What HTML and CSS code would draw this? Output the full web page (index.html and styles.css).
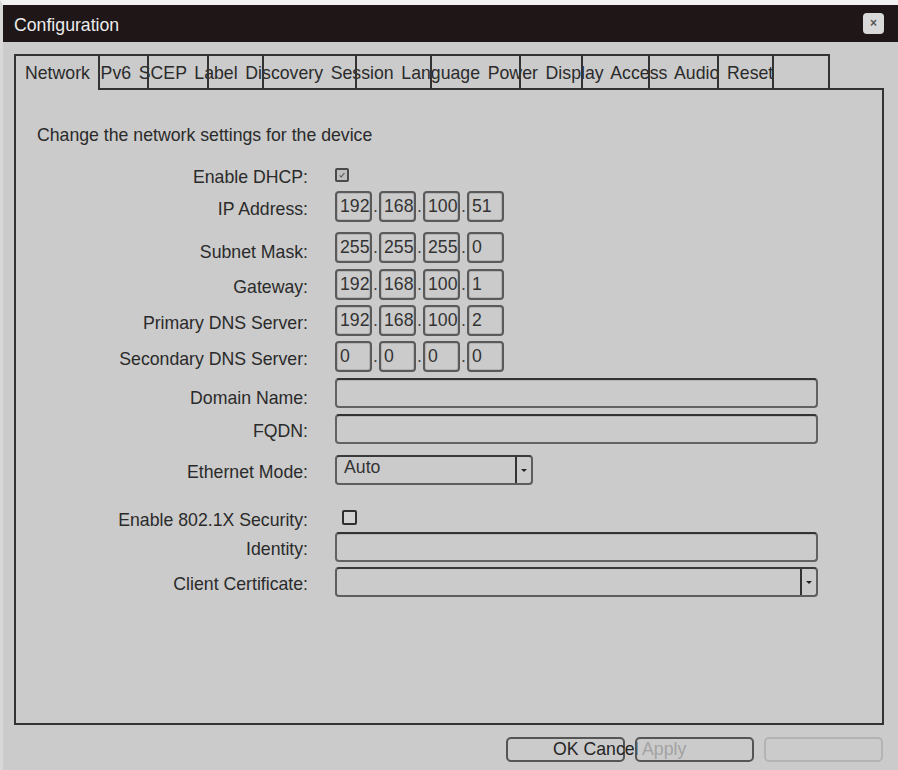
FILE: index.html
```html
<!DOCTYPE html>
<html lang="en">
<head>
<meta charset="utf-8">
<title>Configuration</title>
<link rel="stylesheet" href="styles.css">
</head>
<body>
<div class="window">
  <div class="titlebar">
    <span class="title">Configuration</span>
    <span class="close">&#215;</span>
  </div>

  <div class="tabstrip">
    <div class="tablabels"><span class="first">Network</span> Pv6 SCEP Label Discovery Session Language Power Display Access Audio Reset</div>
    <div class="tab active"></div>
    <div class="tab"></div>
    <div class="tab"></div>
    <div class="tab"></div>
    <div class="tab"></div>
    <div class="tab"></div>
    <div class="tab"></div>
    <div class="tab"></div>
    <div class="tab"></div>
    <div class="tab"></div>
    <div class="tab"></div>
    <div class="tab"></div>
    <div class="tabfill"></div>
  </div>

  <div class="panel">
    <p class="intro">Change the network settings for the device</p>
    <div class="form">
      <div class="row row-check mt-first">
        <span class="lbl">Enable DHCP:</span>
        <span class="check checked"><svg viewBox="0 0 10 10" width="8" height="8"><path d="M2 5.5 L4 7.5 L8 2.5" fill="none" stroke="#555" stroke-width="1.4"/></svg></span>
      </div>
      <div class="row row-ip mt9">
        <span class="lbl">IP Address:</span>
        <div class="ip"><span class="oct">192</span><span class="dot">.</span><span class="oct">168</span><span class="dot">.</span><span class="oct">100</span><span class="dot">.</span><span class="oct">51</span></div>
      </div>
      <div class="row row-ip mt10">
        <span class="lbl lbl-low">Subnet Mask:</span>
        <div class="ip"><span class="oct">255</span><span class="dot">.</span><span class="oct">255</span><span class="dot">.</span><span class="oct">255</span><span class="dot">.</span><span class="oct">0</span></div>
      </div>
      <div class="row row-ip mt6">
        <span class="lbl">Gateway:</span>
        <div class="ip"><span class="oct">192</span><span class="dot">.</span><span class="oct">168</span><span class="dot">.</span><span class="oct">100</span><span class="dot">.</span><span class="oct">1</span></div>
      </div>
      <div class="row row-ip">
        <span class="lbl">Primary DNS Server:</span>
        <div class="ip"><span class="oct">192</span><span class="dot">.</span><span class="oct">168</span><span class="dot">.</span><span class="oct">100</span><span class="dot">.</span><span class="oct">2</span></div>
      </div>
      <div class="row row-ip">
        <span class="lbl">Secondary DNS Server:</span>
        <div class="ip"><span class="oct">0</span><span class="dot">.</span><span class="oct">0</span><span class="dot">.</span><span class="oct">0</span><span class="dot">.</span><span class="oct">0</span></div>
      </div>
      <div class="row row-text mt6">
        <span class="lbl lbl-low">Domain Name:</span>
        <div class="field"></div>
      </div>
      <div class="row row-text mt6">
        <span class="lbl">FQDN:</span>
        <div class="field"></div>
      </div>
      <div class="row row-text mt11">
        <span class="lbl">Ethernet Mode:</span>
        <div class="select select-short"><span class="select-val">Auto</span><span class="select-btn"><i class="arrow"></i></span></div>
      </div>
      <div class="row row-check2 mt25">
        <span class="lbl">Enable 802.1X Security:</span>
        <span class="check plain"></span>
      </div>
      <div class="row row-text mt7">
        <span class="lbl">Identity:</span>
        <div class="field"></div>
      </div>
      <div class="row row-text">
        <span class="lbl">Client Certificate:</span>
        <div class="select select-long"><span class="select-val"></span><span class="select-btn"><i class="arrow"></i></span></div>
      </div>
    </div>
  </div>

  <div class="buttons">
    <div class="btn btn-ok">OK Cancel</div>
    <div class="btn btn-apply">Apply</div>
    <div class="btn btn-blank"></div>
  </div>
</div>
</body>
</html>
```

FILE: styles.css
```css
html, body {
  margin: 0;
  padding: 0;
  background: #cbcbcb;
}

body {
  font-family: "Liberation Sans", Arial, sans-serif;
  font-size: 17.7px;
  color: #2a2a2a;
}

.window {
  width: 898px;
  height: 770px;
  box-sizing: border-box;
  border-top: 5px solid #f1f1f1;
  border-left: 3px solid #d8d8d8;
  background: #cbcbcb;
  overflow: hidden;
}

/* ---------- title bar ---------- */
.titlebar {
  height: 37px;
  background: #1e1617;
  display: flex;
  align-items: center;
  justify-content: space-between;
  padding: 0 14px 0 11px;
}

.title {
  color: #ececec;
  line-height: 20px;
  padding-top: 2px;
}

.close {
  width: 21px;
  height: 21px;
  border-radius: 4px;
  background: #d9d9d9;
  color: #555;
  font-size: 12px;
  font-weight: bold;
  line-height: 21px;
  text-align: center;
}

/* ---------- tabs ---------- */
.tabstrip {
  margin: 12px 0 0 11px;
  width: 870px;
  height: 36px;
  display: grid;
  grid-template-columns: 84px 49px 60px 55px 93px 75px 89px 62px 67px 69px 55px 56px 1fr;
  grid-template-rows: 36px;
}

.tablabels {
  grid-column: 1 / -1;
  grid-row: 1;
  align-self: start;
  padding: 9px 0 0 11px;
  line-height: 20px;
  white-space: nowrap;
  word-spacing: 2.8px;
  color: #2a2a2a;
}

.tablabels .first {
  margin-right: 3px;
}

.tab {
  grid-row: 1;
  border: 2px solid #333;
  margin-right: -2px;
}

.tab.active {
  border-bottom: none;
}

.tabfill {
  grid-row: 1;
  border-bottom: 2px solid #333;
}

.tab:nth-of-type(2)  { grid-column: 1; }
.tab:nth-of-type(3)  { grid-column: 2; }
.tab:nth-of-type(4)  { grid-column: 3; }
.tab:nth-of-type(5)  { grid-column: 4; }
.tab:nth-of-type(6)  { grid-column: 5; }
.tab:nth-of-type(7)  { grid-column: 6; }
.tab:nth-of-type(8)  { grid-column: 7; }
.tab:nth-of-type(9)  { grid-column: 8; }
.tab:nth-of-type(10) { grid-column: 9; }
.tab:nth-of-type(11) { grid-column: 10; }
.tab:nth-of-type(12) { grid-column: 11; }
.tab:nth-of-type(13) { grid-column: 12; }
.tabfill { grid-column: 13; }

/* ---------- panel ---------- */
.panel {
  margin-left: 11px;
  width: 870px;
  height: 635px;
  box-sizing: border-box;
  border: 2px solid #333;
  border-top: none;
  padding: 35px 0 0 21px;
}

.intro {
  margin: 0;
  line-height: 20px;
}

.form {
  margin-left: -21px;
  margin-top: 23px;
}

.row {
  display: flex;
  align-items: center;
  margin-top: 5px;
}

.row.mt-first { margin-top: 0; }
.mt6  { margin-top: 6px; }
.mt7  { margin-top: 7px; }
.mt9  { margin-top: 9px; }
.mt10 { margin-top: 10px; }
.mt11 { margin-top: 11px; }
.mt25 { margin-top: 25px; }

.row-check  { height: 14px; }
.row-check2 { height: 15px; }
.row-ip     { height: 31px; }
.row-text   { height: 30px; }

.lbl {
  flex: none;
  width: 292px;
  margin-right: 27px;
  text-align: right;
  line-height: 20px;
  padding-top: 4px;
  white-space: nowrap;
}

.lbl.lbl-low {
  padding-top: 9px;
}

/* checkboxes */
.check {
  box-sizing: border-box;
  display: flex;
  align-items: center;
  justify-content: center;
  border: 2px solid #3d3d3d;
  border-radius: 2px;
}

.check.checked {
  width: 14px;
  height: 14px;
  background: #bfbfbf;
  border-color: #4a4a4a;
}

.check.plain {
  width: 15px;
  height: 15px;
  margin-left: 7px;
  background: #d2d2d2;
  border-color: #2f2f2f;
}

/* IP octets */
.ip {
  display: flex;
  height: 31px;
}

.oct {
  box-sizing: border-box;
  width: 37px;
  height: 31px;
  border: 2px solid #5a5a5a;
  border-radius: 4px;
  box-shadow: inset 0 0 0 1px #b3b3b3;
  padding-left: 3px;
  line-height: 27px;
  color: #333;
}

.dot {
  width: 7px;
  line-height: 31px;
  text-align: center;
  color: #444;
}

/* text fields */
.field {
  box-sizing: border-box;
  width: 483px;
  height: 30px;
  border: 2px solid #626262;
  border-top-color: #333;
  border-radius: 4px;
  box-shadow: inset 0 1px 0 #b5b5b5;
}

/* selects */
.select {
  box-sizing: border-box;
  height: 30px;
  display: flex;
  border: 2px solid #5e5e5e;
  border-top-color: #3a3a3a;
  border-radius: 4px;
}

.select-short { width: 198px; }
.select-long  { width: 483px; }

.select-val {
  flex: 1;
  padding: 0 0 0 7px;
  line-height: 20px;
  color: #333;
}

.select-btn {
  width: 14px;
  border-left: 2px solid #333;
  display: flex;
  align-items: center;
  justify-content: center;
}

.arrow {
  width: 0;
  height: 0;
  border-left: 3px solid transparent;
  border-right: 3px solid transparent;
  border-top: 3px solid #222;
}

/* ---------- buttons ---------- */
.buttons {
  display: flex;
  justify-content: flex-end;
  gap: 10px;
  margin-top: 12px;
  width: 880px;
}

.btn {
  box-sizing: border-box;
  width: 119px;
  height: 25px;
  border: 2px solid #555;
  border-radius: 5px;
  line-height: 21px;
  white-space: nowrap;
}

.btn-ok {
  padding-left: 45px;
  color: #252525;
}

.btn-apply {
  padding-left: 5px;
  color: #a3a3a3;
}

.btn-blank {
  border-color: #b3b3b3;
}
```
